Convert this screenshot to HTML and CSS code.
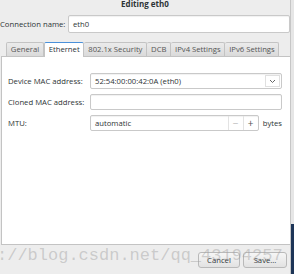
FILE: index.html
```html
<!DOCTYPE html>
<html lang="en">
<head>
    <meta charset="UTF-8">
    <title>Editing eth0</title>
    <link rel="stylesheet" href="styles.css">
</head>
<body>
    <div class="dialog">
        <div class="title">Editing eth0</div>
        <div class="conn-row">
            <span class="conn-label">Connection name:</span>
            <div class="entry conn-entry">eth0</div>
        </div>
        <div class="tabs">
            <div class="tab">General</div>
            <div class="tab active">Ethernet</div>
            <div class="tab">802.1x Security</div>
            <div class="tab">DCB</div>
            <div class="tab">IPv4 Settings</div>
            <div class="tab">IPv6 Settings</div>
        </div>
        <div class="panel">
            <div class="form">
                <span class="label">Device MAC address:</span>
                <div class="entry combo">
                    <span class="combo-text">52:54:00:00:42:0A (eth0)</span>
                    <span class="combo-btn">
                        <svg width="7" height="5" viewBox="0 0 7 5"><path d="M1 1 L3.5 3.5 L6 1" fill="none" stroke="#666" stroke-width="1"/></svg>
                    </span>
                </div>
                <span class="label">Cloned MAC address:</span>
                <div class="entry"></div>
                <span class="label">MTU:</span>
                <div class="mtu">
                    <div class="entry spin">
                        <span class="spin-text">automatic</span>
                        <span class="spin-btn minus">&minus;</span>
                        <span class="spin-btn">+</span>
                    </div>
                    <span class="unit">bytes</span>
                </div>
            </div>
        </div>
        <div class="actions">
            <button class="btn cancel">Cancel</button>
            <button class="btn save">Save...</button>
        </div>
        <div class="edge"></div>
        <div class="watermark">://blog.csdn.net/qq_43194257</div>
    </div>
</body>
</html>
```

FILE: styles.css
```css
body {
    margin: 0;
    background-color: #ededed;
    font-family: "Open Sans", "DejaVu Sans", sans-serif;
    font-size: 7.7px;
    color: #2e3436;
}

.dialog {
    position: relative;
    width: 294px;
    height: 274px;
    overflow: hidden;
}

.title {
    width: 290px;
    height: 8px;
    text-align: center;
    font-weight: bold;
    font-size: 8px;
    line-height: 7px;
}

.conn-row {
    display: flex;
    align-items: center;
    height: 18px;
    margin-top: 7px;
    width: 290px;
}

.conn-label {
    width: 68px;
    flex: none;
}

.entry {
    box-sizing: border-box;
    height: 16px;
    background: #fff;
    border: 1px solid #c9c9c9;
    border-radius: 2px;
    padding: 0 4px;
    line-height: 14px;
    box-shadow: inset 0 1px 1px rgba(0, 0, 0, 0.06);
}

.conn-entry {
    flex: 1;
    height: 18px;
    line-height: 16px;
}

.tabs {
    display: flex;
    align-items: flex-end;
    margin-top: 8px;
    padding-left: 6px;
    height: 15px;
}

.tab {
    box-sizing: border-box;
    height: 14px;
    line-height: 13px;
    padding: 0 3.8px;
    border: 1px solid #c3c3c3;
    border-bottom: none;
    border-left: none;
    border-radius: 2px 2px 0 0;
    background: linear-gradient(#ebebeb, #dadada);
    color: #555;
}

.tab:first-child {
    border-left: 1px solid #c3c3c3;
}

.tab.active {
    height: 15px;
    background: #fff;
    color: #2e3436;
    border-top: 1px solid #4a90d9;
    border-left: 1px solid #c3c3c3;
    margin-bottom: -1px;
    position: relative;
}

.panel {
    box-sizing: border-box;
    width: 290px;
    height: 189px;
    margin-left: 1px;
    background: #fff;
    border: 1px solid #c3c3c3;
    padding: 16px 8px 0 6px;
}

.form {
    display: grid;
    grid-template-columns: 82px 192px;
    row-gap: 5px;
    align-items: center;
}

.label {
    color: #2e3436;
}

.combo {
    display: flex;
    align-items: center;
    padding-right: 1px;
}

.combo-text {
    flex: 1;
}

.combo-btn {
    box-sizing: border-box;
    width: 15px;
    height: 12px;
    border: 1px solid #e0e0e0;
    display: flex;
    align-items: center;
    justify-content: center;
}

.mtu {
    display: flex;
    align-items: center;
}

.spin {
    display: flex;
    width: 170px;
    padding-right: 0;
}

.spin-text {
    flex: 1;
}

.spin-btn {
    width: 14px;
    text-align: center;
    border-left: 1px solid #e3e3e3;
    color: #555;
    font-size: 10px;
}

.spin-btn.minus {
    color: #bbb;
}

.unit {
    margin-left: 4px;
}

.actions {
    display: flex;
    justify-content: flex-end;
    gap: 3px;
    width: 287px;
    margin-top: 7px;
}

.btn {
    box-sizing: border-box;
    height: 16px;
    padding: 0;
    font-family: inherit;
    font-size: 7.7px;
    color: #2e3436;
    background: linear-gradient(#f6f6f6, #e2e2e2);
    border: 1px solid #b9b9b9;
    border-radius: 3px;
}

.cancel {
    width: 42px;
}

.save {
    width: 44px;
}

.edge {
    position: absolute;
    top: 0;
    right: 0;
    width: 3px;
    height: 274px;
    border-left: 1px solid #c6c6c6;
    background: linear-gradient(#e6e6e6 0, #e6e6e6 224px, #1d3557 224px);
}

.watermark {
    position: absolute;
    left: -3px;
    top: 246px;
    font-family: "Liberation Mono", monospace;
    font-size: 17px;
    line-height: 20px;
    color: rgba(160, 160, 160, 0.45);
    white-space: nowrap;
}
```
